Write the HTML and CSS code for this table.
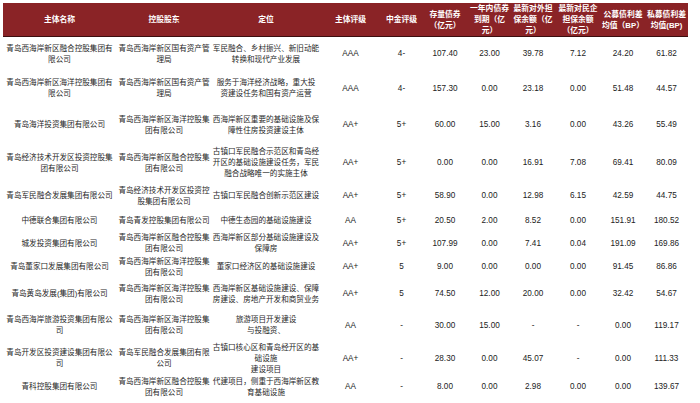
FILE: index.html
```html
<!DOCTYPE html>
<html lang="zh">
<head>
<meta charset="utf-8">
<link rel="stylesheet" href="styles.css">
</head>
<body>
<table class="tbl">
<colgroup>
<col class="c1"><col class="c2"><col class="c3"><col class="c4"><col class="c5"><col class="c6"><col class="c7"><col class="c8"><col class="c9"><col class="c10"><col class="c11">
</colgroup>
<thead>
<tr class="head">
<th>主体名称</th><th>控股股东</th><th>定位</th><th>主体评级</th><th>中金评级</th>
<th>存量债券<br>（亿元）</th>
<th>一年内债券<br>到期（亿<br>元）</th>
<th>最新对外担<br>保余额（亿<br>元）</th>
<th>最新对民企<br>担保余额<br>（亿元）</th>
<th>公募债利差<br>均值（BP）</th>
<th>私募债利差<br>均值(BP)</th>
</tr>
</thead>
<tbody>
<tr class="r1">
<td>青岛西海岸新区融合控股集团有<br>限公司</td><td>青岛西海岸新区国有资产管<br>理局</td><td>军民融合、乡村振兴、新旧动能<br>转换和现代产业发展</td>
<td class="n">AAA</td><td class="n">4-</td><td class="n">107.40</td><td class="n">23.00</td><td class="n">39.78</td><td class="n">7.12</td><td class="n">24.20</td><td class="n">61.82</td>
</tr>
<tr class="r2">
<td>青岛西海岸新区海洋控股集团有<br>限公司</td><td>青岛西海岸新区国有资产管<br>理局</td><td>服务于海洋经济战略，重大投<br>资建设任务和国有资产运营</td>
<td class="n">AAA</td><td class="n">4-</td><td class="n">157.30</td><td class="n">0.00</td><td class="n">23.18</td><td class="n">0.00</td><td class="n">51.48</td><td class="n">44.57</td>
</tr>
<tr class="r3">
<td>青岛海洋投资集团有限公司</td><td>青岛西海岸新区海洋控股集<br>团有限公司</td><td>西海岸新区重要的基础设施及保<br>障性住房投资建设主体</td>
<td class="n">AA+</td><td class="n">5+</td><td class="n">60.00</td><td class="n">15.00</td><td class="n">3.16</td><td class="n">0.00</td><td class="n">43.26</td><td class="n">55.49</td>
</tr>
<tr class="r4">
<td>青岛经济技术开发区投资控股集<br>团有限公司</td><td>青岛西海岸新区融合控股集<br>团有限公司</td><td>古镇口军民融合示范区和青岛经<br>开区的基础设施建设任务，军民<br>融合战略唯一的实施主体</td>
<td class="n">AA+</td><td class="n">5+</td><td class="n">0.00</td><td class="n">0.00</td><td class="n">16.91</td><td class="n">7.08</td><td class="n">69.41</td><td class="n">80.09</td>
</tr>
<tr class="r5">
<td>青岛军民融合发展集团有限公司</td><td>青岛经济技术开发区投资控<br>股集团有限公司</td><td>古镇口军民融合创新示范区建设</td>
<td class="n">AA+</td><td class="n">5+</td><td class="n">58.90</td><td class="n">0.00</td><td class="n">12.98</td><td class="n">6.15</td><td class="n">42.59</td><td class="n">44.75</td>
</tr>
<tr class="r6">
<td>中德联合集团有限公司</td><td>青岛青发控股集团有限公司</td><td>中德生态园的基础设施建设</td>
<td class="n">AA</td><td class="n">5+</td><td class="n">20.50</td><td class="n">2.00</td><td class="n">8.52</td><td class="n">0.00</td><td class="n">151.91</td><td class="n">180.52</td>
</tr>
<tr class="r7">
<td>城发投资集团有限公司</td><td>青岛西海岸新区融合控股集<br>团有限公司</td><td>西海岸新区部分基础设施建设及<br>保障房</td>
<td class="n">AA+</td><td class="n">5+</td><td class="n">107.99</td><td class="n">0.00</td><td class="n">7.41</td><td class="n">0.04</td><td class="n">191.09</td><td class="n">169.86</td>
</tr>
<tr class="r8">
<td>青岛董家口发展集团有限公司</td><td>青岛西海岸新区海洋控股集<br>团有限公司</td><td>董家口经济区的基础设施建设</td>
<td class="n">AA+</td><td class="n">5</td><td class="n">9.00</td><td class="n">0.00</td><td class="n">0.00</td><td class="n">0.00</td><td class="n">91.45</td><td class="n">86.86</td>
</tr>
<tr class="r9">
<td>青岛黄岛发展(集团)有限公司</td><td>青岛西海岸新区海洋控股集<br>团有限公司</td><td>西海岸新区基础设施建设、保障<br>房建设、房地产开发和商贸业务</td>
<td class="n">AA+</td><td class="n">5</td><td class="n">74.50</td><td class="n">12.00</td><td class="n">20.00</td><td class="n">0.00</td><td class="n">32.42</td><td class="n">54.67</td>
</tr>
<tr class="r10">
<td>青岛西海岸旅游投资集团有限公<br>司</td><td>青岛西海岸新区海洋控股集<br>团有限公司</td><td>旅游项目开发建设<br>与投融资、</td>
<td class="n">AA</td><td class="n">-</td><td class="n">30.00</td><td class="n">15.00</td><td class="n">-</td><td class="n">-</td><td class="n">0.00</td><td class="n">119.17</td>
</tr>
<tr class="r11">
<td>青岛开发区投资建设集团有限公<br>司</td><td>青岛军民融合发展集团有限<br>公司</td><td>古镇口核心区和青岛经开区的基<br>础设施<br>建设项目</td>
<td class="n">AA+</td><td class="n">-</td><td class="n">28.30</td><td class="n">0.00</td><td class="n">45.07</td><td class="n">-</td><td class="n">0.00</td><td class="n">111.33</td>
</tr>
<tr class="r12">
<td>青科控股集团有限公司</td><td>青岛西海岸新区融合控股集<br>团有限公司</td><td>代建项目，侧重于西海岸新区教<br>育基础设施</td>
<td class="n">AA</td><td class="n">-</td><td class="n">8.00</td><td class="n">0.00</td><td class="n">2.98</td><td class="n">0.00</td><td class="n">0.00</td><td class="n">139.67</td>
</tr>
</tbody>
</table>
</body>
</html>
```

FILE: styles.css
```css
html, body {
  margin: 0;
  padding: 0;
  background: #ffffff;
}

body {
  padding: 3px 0 0 3px;
  font-family: "Liberation Sans", "Noto Sans CJK SC", sans-serif;
  color: #1f1f1f;
}

.tbl {
  border-collapse: collapse;
  table-layout: fixed;
  width: 685px;
  font-size: 7.6px;
  line-height: 11px;
}

.c1 { width: 113px; }
.c2 { width: 96px; }
.c3 { width: 108px; }
.c4 { width: 61px; }
.c5 { width: 41px; }
.c6 { width: 46px; }
.c7 { width: 43px; }
.c8 { width: 44px; }
.c9 { width: 46px; }
.c10 { width: 44px; }
.c11 { width: 43px; }

.tbl th,
.tbl td {
  padding: 0;
  text-align: center;
  vertical-align: middle;
  white-space: nowrap;
  overflow: visible;
}

.head {
  height: 33px;
  background: #8a2326;
}

.head th {
  color: #ffffff;
  font-weight: bold;
  font-size: 7.8px;
  border-bottom: 1px solid #3c0f10;
}

.tbl td.n {
  font-size: 8.2px;
  color: #222222;
}

.r1 { height: 34px; }
.r2 { height: 35px; }
.r3 { height: 38px; }
.r4 { height: 38px; }
.r5 { height: 28px; }
.r6 { height: 22px; }
.r7 { height: 23px; }
.r8 { height: 24px; }
.r9 { height: 30px; }
.r10 { height: 33px; }
.r11 { height: 33px; }
.r12 { height: 24px; }
```
